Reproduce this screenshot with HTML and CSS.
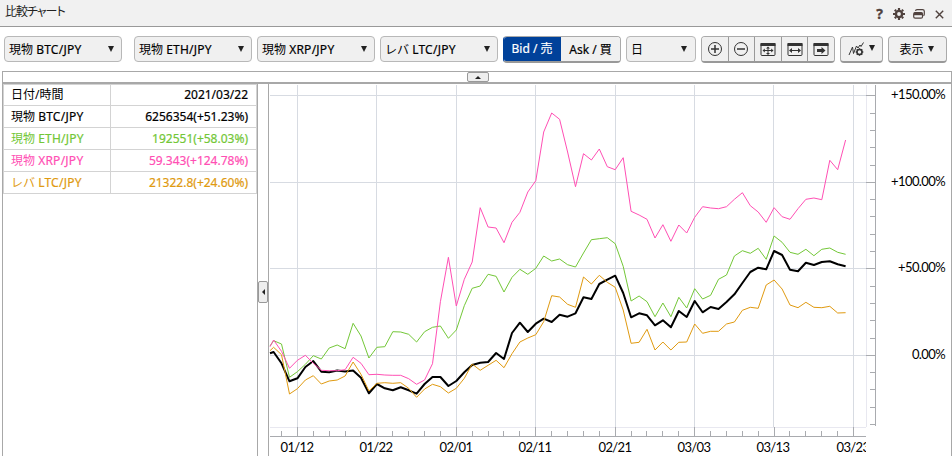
FILE: index.html
```html
<!DOCTYPE html>
<html lang="ja">
<head>
    <meta charset="utf-8">
    <title>比較チャート</title>
    <link rel="stylesheet" href="styles.css">
</head>
<body>
    <header class="titlebar">
        <h1>比較チャート</h1>
        <div class="window-icons">
            <span class="help">?</span>
            <svg class="gear" width="12" height="12" viewBox="0 0 12 12"><circle cx="6" cy="6" r="3.1" fill="none" stroke="#50423e" stroke-width="2.4"/><path d="M6 0v2M6 10v2M0 6h2M10 6h2M1.8 1.8l1.3 1.3M8.9 8.9l1.3 1.3M1.8 10.2l1.3-1.3M8.9 3.1l1.3-1.3" stroke="#50423e" stroke-width="2.2"/></svg>
            <svg class="restore" width="12" height="10" viewBox="0 0 12 10"><path d="M2.5 1.8Q2.7.7 4 .7h5.5q1.8 0 1.8 1.6v3q0 1-.9 1.4" fill="none" stroke="#50423e" stroke-width="1.2"/><rect x=".7" y="3.5" width="8.8" height="5.7" rx="1.5" fill="none" stroke="#50423e" stroke-width="1.2"/><path d="M1 3.5h8.3v2.7H1z" fill="#50423e"/></svg>
            <svg class="close" width="9" height="9" viewBox="0 0 9 9"><path d="M.8.8l7.4 7.4M8.2.8L.8 8.2" stroke="#50423e" stroke-width="1.4"/></svg>
        </div>
    </header>

    <div class="toolbar">
        <button class="select first"><span>現物 <b>BTC/JPY</b></span><i class="arrow"></i></button>
        <button class="select"><span>現物 <b>ETH/JPY</b></span><i class="arrow"></i></button>
        <button class="select"><span>現物 <b>XRP/JPY</b></span><i class="arrow"></i></button>
        <button class="select"><span>レバ <b>LTC/JPY</b></span><i class="arrow"></i></button>
        <div class="group side">
            <button class="active">Bid / 売</button>
            <button>Ask / 買</button>
        </div>
        <button class="select period">日<i class="arrow"></i></button>
        <div class="group zoom">
            <button><svg width="16" height="16" viewBox="0 0 16 16"><circle cx="8" cy="8" r="6.5" class="thin"/><path d="M8 4v8M4 8h8" class="thick"/></svg></button>
            <button><svg width="16" height="16" viewBox="0 0 16 16"><circle cx="8" cy="8" r="6.5" class="thin"/><path d="M4 8h8" class="thick"/></svg></button>
            <button><svg width="16" height="16" viewBox="0 0 16 16"><rect x="1" y="2.5" width="14" height="12" rx="1" class="thin"/><path d="M.5 2h15v3H.5z"/><path d="M4 9.5h8M8 6.500v6.500" class="thin"/><path d="M8 5.500l2 2H6zM8 14l2-2H6zM2.500 9.500l2.300-2v4zM13.500 9.500l-2.300-2v4z"/></svg></button>
            <button><svg width="16" height="16" viewBox="0 0 16 16"><rect x="1" y="2.5" width="14" height="12" rx="1" class="thin"/><path d="M.5 2h15v3H.5z"/><path d="M4 9.5h8" class="thin"/><path d="M2 9.5L5 7v5zM14 9.5L11 7v5z"/></svg></button>
            <button><svg width="16" height="16" viewBox="0 0 16 16"><rect x="1" y="2.5" width="14" height="12" rx="1" class="thin"/><path d="M.5 2h15v3H.5z"/><path d="M4 8h4.5V6l4 3.5-4 3.5v-2H4z"/></svg></button>
        </div>
        <button class="push indicator">
            <svg width="16" height="16" viewBox="0 0 16 16"><path d="M1 14L4.5 6l1 6.500L8.500 5l1.500 2L12 4l1 1.500 2.500-4" class="thin"/><circle cx="11.5" cy="11" r="2.5" class="thick"/><path d="M11.5 7.200v1.300M11.500 13.500v1.300M7.700 11H9M14 11h1.300M8.800 8.300l1 1M13.200 12.700l1 1M8.800 13.700l1-1M13.200 9.300l1-1" class="thick"/></svg>
            <i class="arrow"></i>
        </button>
        <button class="push display">表示<i class="arrow"></i></button>
    </div>

    <main class="frame">
        <div class="collapse-bar"><button class="handle-up"><i></i></button></div>
        <div class="content">
            <section class="legend">
                <table>
                    <tr><td>日付/時間</td><td>2021/03/22</td></tr>
                    <tr class="btc"><td>現物 <b>BTC/JPY</b></td><td>6256354(+51.23%)</td></tr>
                    <tr class="eth"><td>現物 <b>ETH/JPY</b></td><td>192551(+58.03%)</td></tr>
                    <tr class="xrp"><td>現物 <b>XRP/JPY</b></td><td>59.343(+124.78%)</td></tr>
                    <tr class="ltc"><td>レバ <b>LTC/JPY</b></td><td>21322.8(+24.60%)</td></tr>
                </table>
            </section>
            <div class="splitter"><button class="handle-left"><i></i></button></div>
            <section class="chart">
                <svg id="chart" width="682" height="372" viewBox="269 84 682 372"></svg>
            </section>
        </div>
    </main>

    <script src="chart.js"></script>
</body>
</html>
```

FILE: styles.css
```css
body {
    margin: 0;
    width: 952px;
    height: 456px;
    overflow: hidden;
    display: flex;
    flex-direction: column;
    background: #fff;
    color: #000;
    font: 12px "Noto Sans", "Noto Sans CJK JP", sans-serif;
}
.titlebar {
    display: flex;
    justify-content: space-between;
    box-sizing: border-box;
    height: 27px;
    padding: 0 8px 0 5px;
    background: #f1f1f1;
    border-bottom: 1px solid #999;
}
h1 {
    margin: 0;
    font-size: 12px;
    font-weight: normal;
    line-height: 23px;
    font-feature-settings: "palt";
    letter-spacing: -1px;
    color: #222;
}
.window-icons {
    display: flex;
    align-items: center;
    padding-top: 2px;
    color: #50423e;
}
.help {
    font-size: 14px;
    font-weight: bold;
    line-height: 20px;
    -webkit-text-stroke: 0.3px #50423e;
}
.gear {
    margin-left: 10px;
}
.restore {
    margin-left: 8px;
}
.close {
    margin-left: 10px;
}
.toolbar {
    display: flex;
    box-sizing: border-box;
    height: 44px;
    padding: 9px 0 0 4px;
    gap: 5px;
}
b {
    font-weight: normal;
    letter-spacing: 0.25px;
    -webkit-text-stroke: 0.2px;
}
button {
    box-sizing: border-box;
    margin: 0;
    padding: 0;
    border: 0;
    background: #f0f0f0;
    color: #000;
    font: inherit;
    white-space: nowrap;
}
.select {
    display: flex;
    align-items: center;
    justify-content: space-between;
    width: 118px;
    height: 26px;
    padding: 0 7px 1px 4px;
    border: 1px solid #b8b8b8;
    border-radius: 4px;
}
.first {
    margin-right: 7px;
}
.period {
    width: 70px;
    padding-right: 8px;
}
.arrow {
    width: 0;
    height: 0;
    border: 3.5px solid transparent;
    border-top: 6px solid #222;
    border-bottom: 0;
}
.group,
.push {
    display: flex;
    box-sizing: border-box;
    height: 27px;
    overflow: hidden;
    border: 1px solid #aaa;
    border-bottom: 2px solid #999;
    border-radius: 4px;
}
.side {
    width: 118px;
    border-left-color: #00419a;
}
.side button {
    flex: 1;
    padding-bottom: 1px;
    -webkit-text-stroke: 0.2px;
}
.side .active {
    flex: none;
    width: 58px;
    margin: -1px 0 0 -1px;
    background: #00419a;
    color: #fff;
}
.zoom {
    width: 134px;
}
.zoom button {
    display: flex;
    align-items: center;
    justify-content: center;
    flex: 1;
}
.zoom button + button {
    border-left: 1px solid #999;
}
.toolbar svg {
    fill: #333;
}
.toolbar .thin,
.toolbar .thick {
    fill: none;
    stroke: #333;
    stroke-width: 1;
}
.toolbar .thick {
    stroke-width: 1.5;
}
.push {
    align-items: center;
    justify-content: center;
}
.indicator {
    width: 43px;
    gap: 5px;
}
.indicator .arrow {
    margin-top: -2px;
}
.display {
    width: 59px;
    padding-right: 2px;
    gap: 4px;
}
.frame {
    flex: 1;
    margin-left: 2px;
    border: 1px solid #a8a8a8;
    border-bottom: 0;
}
.collapse-bar {
    height: 10px;
    padding-left: 464px;
    border-bottom: 2px solid #a8a8a8;
}
.handle-up,
.handle-left {
    display: flex;
    align-items: center;
    justify-content: center;
    border: 1px solid #999;
    border-radius: 2px;
    background: #eee;
}
.handle-up {
    width: 22px;
    height: 10px;
}
.handle-up i {
    border: 3px solid transparent;
    border-top: 0;
    border-bottom: 3px solid #222;
}
.handle-left {
    width: 10px;
    height: 22px;
}
.handle-left i {
    border: 3px solid transparent;
    border-left: 0;
    border-right: 3px solid #222;
}
.content {
    display: flex;
    height: 372px;
}
.legend {
    width: 254px;
    border-right: 1px solid #a8a8a8;
}
table {
    width: 254px;
    border-collapse: separate;
    border-spacing: 0;
    border-top: 1px solid #d3d3d3;
    border-left: 1px solid #d3d3d3;
    table-layout: fixed;
}
td {
    box-sizing: border-box;
    height: 22px;
    padding: 0 8px 1px 7px;
    border-right: 1px solid #d3d3d3;
    border-bottom: 1px solid #d3d3d3;
    line-height: 19px;
}
tr:first-child td {
    height: 21px;
}
td:first-child {
    width: 107px;
}
td:last-child {
    text-align: right;
    -webkit-text-stroke: 0.2px;
}
.eth {
    color: #73c737;
}
.xrp {
    color: #ff4fb4;
}
.ltc {
    color: #e09a10;
}
.splitter {
    width: 10px;
    padding-top: 197px;
    border-right: 1px solid #a8a8a8;
}
.chart {
    width: 682px;
}
.chart svg {
    display: block;
}
.grid {
    stroke: #d7dbe2;
    shape-rendering: crispEdges;
}
.edge {
    stroke: #e8e8f0;
    shape-rendering: crispEdges;
}
.axis {
    stroke: #a9abaf;
    shape-rendering: crispEdges;
}
.series {
    fill: none;
    stroke-linejoin: round;
}
.btc-line {
    stroke: #000;
    stroke-width: 2;
}
.eth-line {
    stroke: #73c737;
}
.xrp-line {
    stroke: #ff4fb4;
}
.ltc-line {
    stroke: #e09a10;
}
.label {
    font-family: Lato, sans-serif;
    font-size: 13px;
    letter-spacing: -0.6px;
}
```

FILE: chart.js
```js
const chart = document.getElementById('chart');

const LEFT = 270;
const FIRST = 273.6; // x of the first full day
const STEP = 7.945;

// first value is where the line enters at the left edge
const series = [
    { name: 'eth', y: [346, 340.7, 344, 377.3, 371.7, 364.3, 355.7, 359, 348, 345, 348.7, 323.3, 336, 358, 347.3, 346.7, 331.7, 332, 334.3, 342, 331.7, 327.3, 326, 338.3, 330, 305.7, 288.3, 286, 274.3, 276.3, 292, 277.3, 269.3, 274.3, 268.3, 256, 261, 259, 264.7, 267, 253, 239.7, 238.7, 237.7, 243.7, 266.3, 301, 296, 301.7, 316.7, 303, 316.7, 297.3, 308, 288.7, 299, 295.3, 279.3, 275, 256, 250.7, 253.3, 248.3, 259.3, 236, 242.3, 252.3, 254.3, 249.3, 255.7, 249.3, 248, 252.3, 254.3] },
    { name: 'btc', y: [353.3, 352, 363.3, 381.3, 378.3, 367, 361, 371.7, 372.3, 370.5, 371.5, 370.5, 377.7, 393.3, 384, 388.3, 390.3, 387.3, 390.3, 393.7, 384, 377, 377, 386, 381, 372.3, 365, 362.7, 362, 353, 359, 333, 322.7, 332, 323.7, 318.7, 322, 314.7, 316.7, 313.3, 297.3, 299, 284, 279.7, 275.7, 293, 317.3, 313.3, 315.3, 325.3, 320.3, 327.3, 311, 317, 301, 312.3, 307, 309, 302, 294.3, 283, 272, 267.7, 269.3, 251, 255, 269.7, 271.3, 262.7, 265, 262, 261.3, 264.3, 266.3] },
    { name: 'xrp', y: [346.7, 340, 351.3, 368.3, 360.3, 355.3, 363.3, 370.3, 370.7, 370.7, 369.7, 357.3, 363.3, 374.7, 374.3, 375, 375.3, 375.3, 378.7, 384.3, 380, 363.7, 301.7, 257.3, 306, 279.3, 262, 207.7, 227, 228, 242.7, 222.3, 212.3, 192, 180.7, 132, 113, 119.3, 152, 186.7, 153.7, 160, 149, 166.7, 169.7, 157.7, 211.3, 215, 219.3, 238, 224.7, 241.3, 225, 233, 217.3, 206.7, 208, 208.7, 206.7, 199.3, 192.7, 205.7, 212, 222.3, 207.7, 216.7, 219.3, 208.7, 199.3, 198, 199.7, 160.3, 169.7, 140] },
    { name: 'ltc', y: [350.7, 347.3, 354.7, 394, 388.7, 380, 375.7, 384, 381, 380, 376, 362, 374.3, 391, 383.3, 382.7, 383.3, 382.7, 388.3, 397.3, 389, 384.3, 386.7, 393, 388.3, 378.3, 364, 370.3, 365.3, 360.3, 367.7, 353.7, 342, 338, 334.7, 321.7, 295.7, 297, 304.3, 307.3, 277, 284, 275.3, 282.3, 287.3, 310, 343.3, 342.3, 329.3, 350, 342, 350, 342.3, 342, 324, 333.3, 331.3, 331.3, 324, 322, 310.3, 307.3, 308.3, 285, 280, 289, 305, 307.7, 302.3, 307.3, 307.7, 306.3, 313, 312.7] }
];

const dates = [[297, '01/12'], [376, '01/22'], [456, '02/01'], [535, '02/11'], [615, '02/21'], [694, '03/03'], [773, '03/13'], [853, '03/23']];
const percents = [[95, '+150.00%'], [182, '+100.00%'], [268, '+50.00%'], [355, '0.00%']];

function line(x1, y1, x2, y2, cls) {
    return `<line x1="${x1}" y1="${y1}" x2="${x2}" y2="${y2}" class="${cls}"/>`;
}

let out = '<clipPath id="plot"><rect x="269" y="84" width="597" height="372"/></clipPath>';

// grid
out += line(LEFT, 427.5, 866, 427.5, 'edge') + line(866.5, 85, 866.5, 427, 'edge');
for (const [x] of dates) out += line(x + 0.5, 85, x + 0.5, 427, 'grid');
for (const [y] of percents) out += line(LEFT, y + 0.5, 866, y + 0.5, 'grid');

// axes with ticks
out += line(LEFT, 436.5, 866, 436.5, 'axis') + line(875.5, 85, 875.5, 426, 'axis');
for (let k = -2; k <= 70; k += 2) {
    const x = Math.floor(297.4 + k * STEP) + 0.5;
    out += line(x, k % 10 ? 431 : 427, x, 436, 'axis');
}
for (let k = -15; k <= 4; k++) {
    const y = Math.floor(355.3 + k * 17.3) + 0.5;
    out += line(k % 5 ? 870 : 866, y, 875, y, 'axis');
}

for (const s of series) {
    const points = s.y.map((y, i) => {
        const x = i === 0 ? LEFT : FIRST + (i - 1) * STEP;
        return x.toFixed(1) + ',' + y;
    });
    out += `<polyline class="series ${s.name}-line" points="${points.join(' ')}"/>`;
}

out += '<g clip-path="url(#plot)">';
for (const [x, text] of dates) out += `<text class="label" x="${x}" y="452" text-anchor="middle">${text}</text>`;
out += '</g>';
for (const [y, text] of percents) out += `<text class="label" x="945" y="${y + 4}" text-anchor="end">${text}</text>`;

chart.innerHTML = out;
```
